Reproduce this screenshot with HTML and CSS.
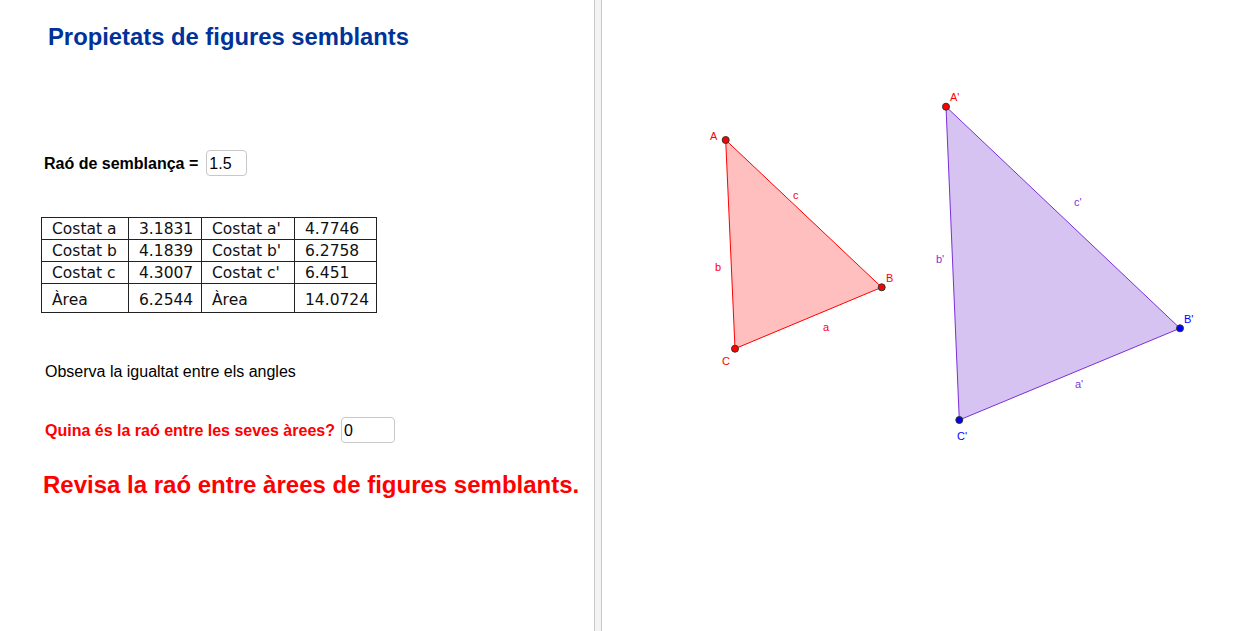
FILE: index.html
```html
<!DOCTYPE html>
<html lang="ca">
<head>
<meta charset="utf-8">
<title>Propietats de figures semblants</title>
<link rel="stylesheet" href="styles.css">
</head>
<body>
<div class="app">
  <div class="left">
    <h1 class="title">Propietats de figures semblants</h1>
    <div class="row ratio-row">
      <span class="label-bold">Raó de semblança =</span>
      <span class="input w41">1.5</span>
    </div>
    <table class="data">
      <tr><td class="c1">Costat a</td><td class="c2">3.1831</td><td class="c3">Costat a'</td><td class="c4">4.7746</td></tr>
      <tr><td>Costat b</td><td>4.1839</td><td>Costat b'</td><td>6.2758</td></tr>
      <tr><td>Costat c</td><td>4.3007</td><td>Costat c'</td><td>6.451</td></tr>
      <tr class="last"><td>Àrea</td><td>6.2544</td><td>Àrea</td><td>14.0724</td></tr>
    </table>
    <p class="observe">Observa la igualtat entre els angles</p>
    <div class="row question-row">
      <span class="label-bold red">Quina és la raó entre les seves àrees?</span>
      <span class="input w54">0</span>
    </div>
    <p class="feedback">Revisa la raó entre àrees de figures semblants.</p>
  </div>
  <div class="divider"></div>
  <div class="right">
    <svg class="canvas" viewBox="602 0 647 631" width="647" height="631">
      <polygon class="tri-red" points="725.7,140 881.7,287.3 735,348.7"/>
      <polygon class="tri-purple" points="946,106.7 1180,328.3 959.3,420"/>
      <circle class="pt red-pt" cx="725.7" cy="140" r="3.5"/>
      <circle class="pt red-pt" cx="881.7" cy="287.3" r="3.5"/>
      <circle class="pt red-pt" cx="735" cy="348.7" r="3.5"/>
      <circle class="pt red-pt" cx="946" cy="106.7" r="3.5"/>
      <circle class="pt blue-pt" cx="1180" cy="328.3" r="3.5"/>
      <circle class="pt blue-pt" cx="959.3" cy="420" r="3.5"/>
      <text class="lbl lred" x="710" y="140">A</text>
      <text class="lbl lred" x="793" y="199">c</text>
      <text class="lbl lred" x="886" y="282">B</text>
      <text class="lbl lred" x="715" y="271">b</text>
      <text class="lbl lred" x="823" y="331">a</text>
      <text class="lbl lred" x="722" y="365">C</text>
      <text class="lbl lred" x="950" y="101">A'</text>
      <text class="lbl lpurple" x="1074" y="206">c'</text>
      <text class="lbl lpurple" x="936" y="263">b'</text>
      <text class="lbl lblue" x="1184" y="323">B'</text>
      <text class="lbl lpurple" x="1075" y="388">a'</text>
      <text class="lbl lblue" x="957" y="440">C'</text>
    </svg>
  </div>
</div>
</body>
</html>
```

FILE: styles.css
```css
html, body {
  margin: 0;
  padding: 0;
  background: #ffffff;
}

body {
  font-family: "Liberation Sans", Arial, sans-serif;
  color: #000;
  width: 1249px;
  height: 631px;
  overflow: hidden;
}

.app {
  display: flex;
  width: 1249px;
  height: 631px;
}

.left {
  width: 594px;
  flex: none;
  position: relative;
}

.title {
  margin: 0;
  padding: 23px 0 0 48px;
  font-size: 23.8px;
  line-height: 28px;
  font-weight: bold;
  color: #003399;
}

.row {
  display: flex;
  align-items: center;
}

.ratio-row {
  margin-top: 99px;
  padding-left: 44px;
  height: 26px;
}

.label-bold {
  font-size: 16px;
  font-weight: bold;
  line-height: 19px;
}

.red {
  color: #ff0000;
}

.input {
  box-sizing: border-box;
  height: 26px;
  border: 1px solid #c8c8c8;
  border-radius: 4px;
  font-size: 16px;
  line-height: 26px;
  padding-left: 2px;
  color: #000;
  background: #fff;
  margin-left: 8px;
}

.w41 { width: 41px; }
.w54 { width: 54px; margin-left: 6px; }

.data {
  margin: 41px 0 0 41px;
  border-collapse: collapse;
  font-family: "DejaVu Sans", sans-serif;
  font-size: 15.5px;
  color: #111;
}

.data td {
  border: 1px solid #222;
  padding: 1px 0 0 10px;
  height: 20px;
  line-height: 20px;
  white-space: nowrap;
}

.data tr.last td {
  height: 24px;
  padding-top: 4px;
}

.data td.c1 { width: 76px; }
.data td.c2 { width: 62px; }
.data td.c3 { width: 82px; }
.data td.c4 { width: 71px; }

.observe {
  margin: 49px 0 0 45px;
  font-size: 16px;
  line-height: 19px;
}

.question-row {
  margin-top: 36px;
  padding-left: 45px;
  height: 26px;
}

.feedback {
  margin: 28px 0 0 43px;
  font-size: 24px;
  line-height: 28px;
  font-weight: bold;
  color: #ff0000;
}

.divider {
  flex: none;
  width: 6px;
  border-left: 1px solid #c8c8c8;
  border-right: 1px solid #c8c8c8;
  background: #f3f3f3;
}

.right {
  flex: 1;
  position: relative;
}

.canvas {
  display: block;
}

.tri-red {
  fill: #ffbfbf;
  stroke: #ff0000;
  stroke-width: 1;
}

.tri-purple {
  fill: #d7c3f1;
  stroke: #7a2fd8;
  stroke-width: 1;
}

.pt {
  stroke: #333333;
  stroke-width: 1;
}

.red-pt { fill: #ff0000; }
.blue-pt { fill: #0000ff; }

.lbl {
  font-family: "Liberation Sans", Arial, sans-serif;
  font-size: 11px;
}

.lred { fill: #ff0000; }
.lpurple { fill: #7f33d6; }
.lblue { fill: #0000ff; }
```
